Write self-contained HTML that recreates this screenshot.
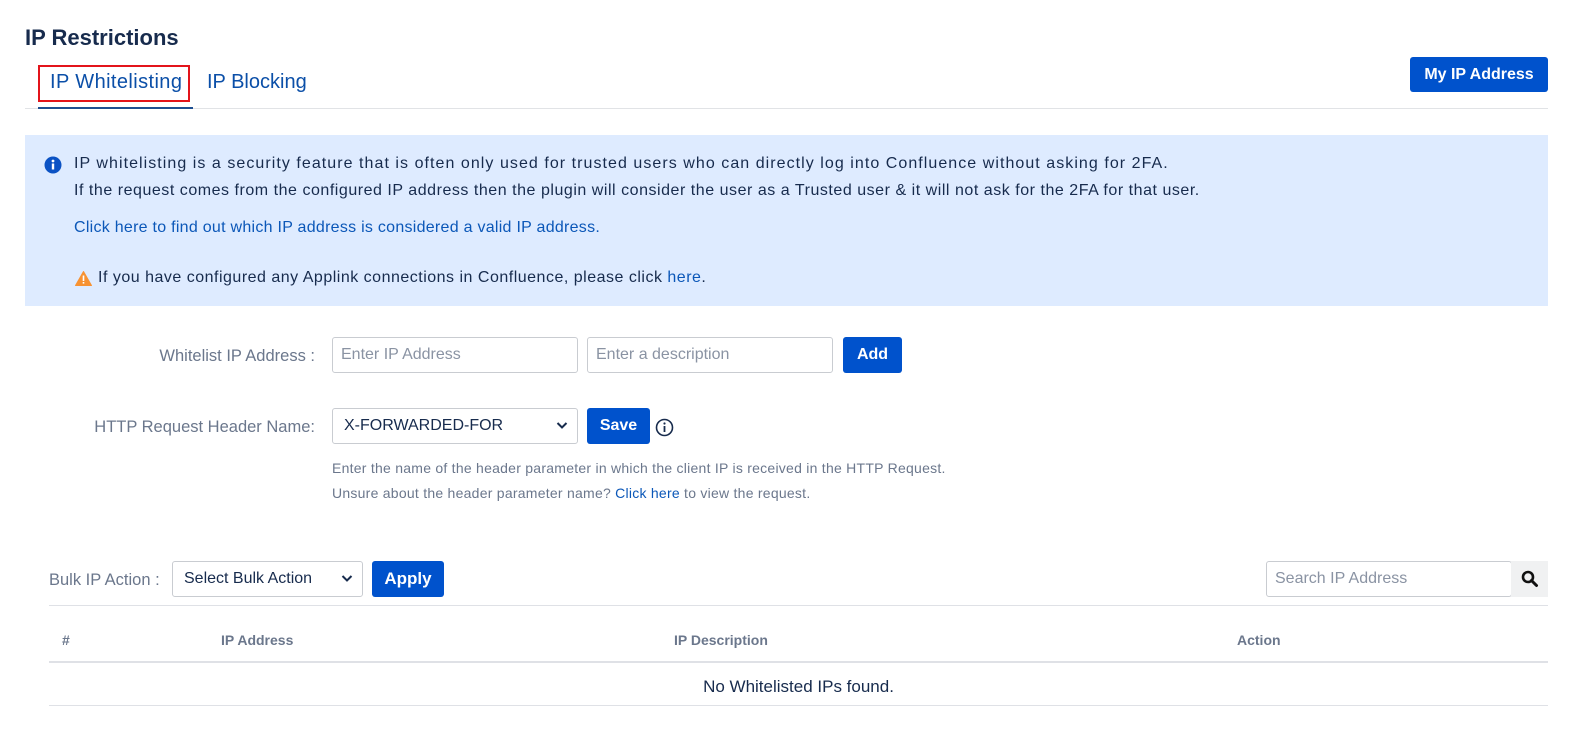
<!DOCTYPE html>
<html><head><meta charset="utf-8"><style>
*{box-sizing:border-box;margin:0;padding:0}
body{width:1594px;height:730px;background:#fff;font-family:"Liberation Sans",sans-serif;color:#172b4d;position:relative;overflow:hidden}
.a{position:absolute;white-space:nowrap}
.btn{position:absolute;background:#0052cc;color:#fff;font-weight:bold;font-size:16px;border-radius:3px;display:flex;align-items:center;justify-content:center}
.inp{position:absolute;border:1px solid #c9ccd1;border-radius:3px;background:#fff;font-size:16px;color:#8a93a3;display:flex;align-items:center;padding-left:8px}
.sel{color:#172b4d;padding-left:11px}
.chev{position:absolute;right:9px;top:50%;margin-top:-5px}
.lbl{font-size:16.5px;color:#6b778c}
.link{color:#0b57b8}
.th{font-size:14px;font-weight:bold;color:#6b778c}
.line{position:absolute;left:49px;width:1499px;background:#dfe1e6}
</style></head><body>
<div class="a" style="left:25px;top:25px;font-size:22px;font-weight:bold;color:#172b4d">IP Restrictions</div>
<div class="a" style="left:38px;top:65px;width:152px;height:37px;border:2px solid #e3141b"></div>
<div class="a" style="left:50px;top:71px;font-size:20px;letter-spacing:0.4px;color:#0b4fa8">IP Whitelisting</div>
<div class="a" style="left:207px;top:71px;font-size:20px;color:#0b4fa8">IP Blocking</div>
<div class="a" style="left:25px;top:108px;width:1523px;height:1px;background:#e1e3e6"></div>
<div class="a" style="left:38px;top:107px;width:155px;height:2px;background:#1d4f91"></div>
<div class="btn" style="left:1410px;top:57px;width:138px;height:35px">My IP Address</div>

<div class="a" style="left:25px;top:135px;width:1523px;height:171px;background:#deebff"></div>
<svg class="a" style="left:44px;top:156px" width="18" height="18" viewBox="0 0 18 18"><circle cx="9" cy="9" r="8.5" fill="#0b52c4"/><rect x="7.8" y="7.5" width="2.4" height="6" fill="#fff"/><circle cx="9" cy="5" r="1.4" fill="#fff"/></svg>
<div class="a" style="left:74px;top:155px;font-size:16px;letter-spacing:1.05px">IP whitelisting is a security feature that is often only used for trusted users who can directly log into Confluence without asking for 2FA.</div>
<div class="a" style="left:74px;top:182px;font-size:16px;letter-spacing:0.53px">If the request comes from the configured IP address then the plugin will consider the user as a Trusted user &amp; it will not ask for the 2FA for that user.</div>
<div class="a link" style="left:74px;top:219px;font-size:16px;letter-spacing:0.27px">Click here to find out which IP address is considered a valid IP address.</div>
<svg class="a" style="left:75px;top:271px" width="17" height="15" viewBox="0 0 17 15"><path d="M8.5 0.5 L16.5 14.5 L0.5 14.5 Z" fill="#f79232" stroke="#f79232" stroke-linejoin="round"/><rect x="7.7" y="4.5" width="1.6" height="5.5" fill="#fff"/><rect x="7.7" y="11" width="1.6" height="1.6" fill="#fff"/></svg>
<div class="a" style="left:98px;top:269px;font-size:16px;letter-spacing:0.5px">If you have configured any Applink connections in Confluence, please click <span class="link">here</span>.</div>

<div class="a lbl" style="right:1279px;top:347px">Whitelist IP Address :</div>
<div class="inp" style="left:332px;top:337px;width:246px;height:36px">Enter IP Address</div>
<div class="inp" style="left:587px;top:337px;width:246px;height:36px">Enter a description</div>
<div class="btn" style="left:843px;top:337px;width:59px;height:36px">Add</div>

<div class="a lbl" style="right:1279px;top:418px">HTTP Request Header Name:</div>
<div class="inp sel" style="left:332px;top:408px;width:246px;height:36px">X-FORWARDED-FOR<svg class="chev" width="12" height="9" viewBox="0 0 12 9"><path d="M1.5 2 L6 6.5 L10.5 2" fill="none" stroke="#172b4d" stroke-width="2"/></svg></div>
<div class="btn" style="left:587px;top:408px;width:63px;height:36px">Save</div>
<svg class="a" style="left:655px;top:418px" width="19" height="19" viewBox="0 0 19 19"><circle cx="9.5" cy="9.5" r="8" fill="none" stroke="#172b4d" stroke-width="1.6"/><rect x="8.6" y="8" width="1.8" height="6" fill="#172b4d"/><circle cx="9.5" cy="5.5" r="1.1" fill="#172b4d"/></svg>
<div class="a" style="left:332px;top:460px;font-size:14px;letter-spacing:0.25px;color:#6b778c">Enter the name of the header parameter in which the client IP is received in the HTTP Request.</div>
<div class="a" style="left:332px;top:485px;font-size:14px;letter-spacing:0.25px;color:#6b778c">Unsure about the header parameter name? <span class="link">Click here</span> to view the request.</div>

<div class="a lbl" style="left:49px;top:571px">Bulk IP Action :</div>
<div class="inp sel" style="left:172px;top:561px;width:191px;height:36px">Select Bulk Action<svg class="chev" width="12" height="9" viewBox="0 0 12 9"><path d="M1.5 2 L6 6.5 L10.5 2" fill="none" stroke="#172b4d" stroke-width="2"/></svg></div>
<div class="btn" style="left:372px;top:561px;width:72px;height:36px;font-size:17px">Apply</div>
<div class="inp" style="left:1266px;top:561px;width:246px;height:36px">Search IP Address</div>
<div class="a" style="left:1511px;top:561px;width:37px;height:36px;background:#f0f1f2"></div>
<svg class="a" style="left:1521px;top:570px" width="18" height="18" viewBox="0 0 18 18"><circle cx="7" cy="7" r="5" fill="none" stroke="#111" stroke-width="2.6"/><path d="M10.5 10.5 L15.5 15.5" stroke="#111" stroke-width="3" stroke-linecap="round"/></svg>

<div class="line" style="top:605px;height:1px"></div>
<div class="a th" style="left:62px;top:632px">#</div>
<div class="a th" style="left:221px;top:632px">IP Address</div>
<div class="a th" style="left:674px;top:632px">IP Description</div>
<div class="a th" style="left:1237px;top:632px">Action</div>
<div class="line" style="top:661px;height:2px"></div>
<div class="a" style="left:49px;width:1499px;top:677px;text-align:center;font-size:17px">No Whitelisted IPs found.</div>
<div class="line" style="top:705px;height:1px"></div>
</body></html>
